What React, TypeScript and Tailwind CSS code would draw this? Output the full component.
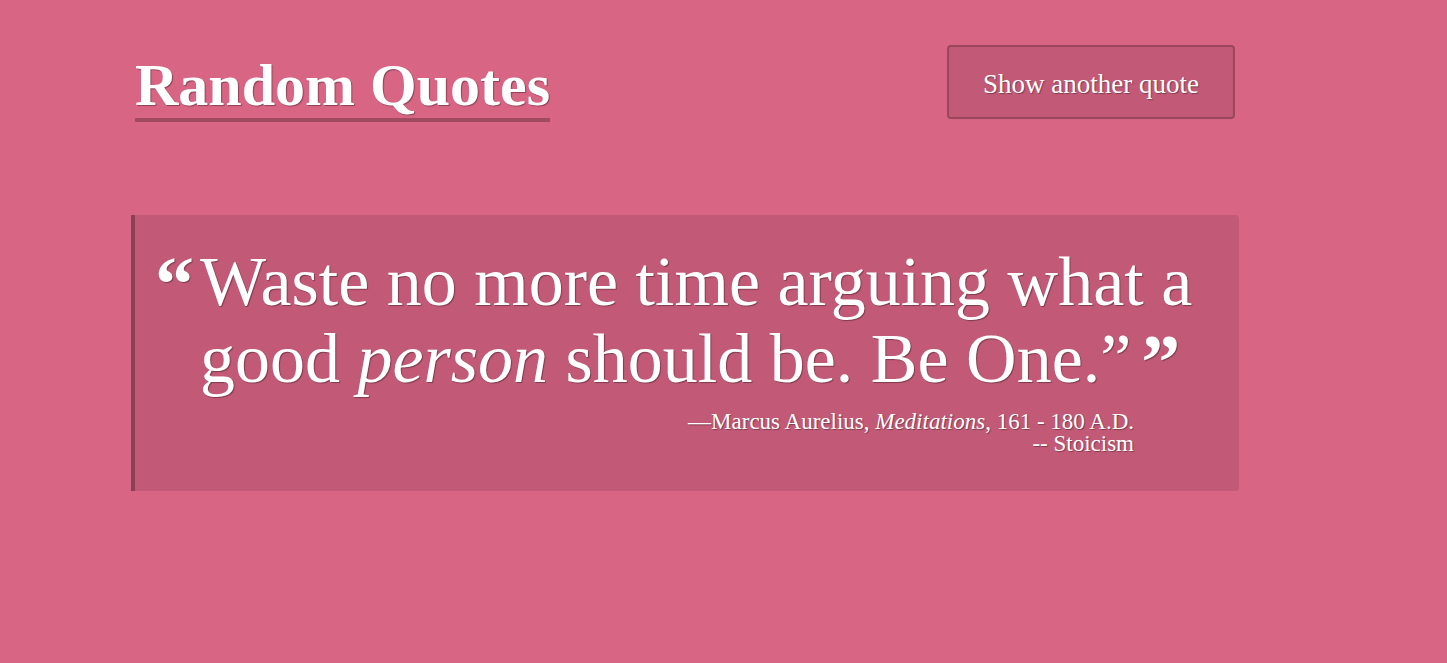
export default function App() {
  const shadow = "[text-shadow:1px_1px_1px_rgba(0,0,0,0.35)]";
  return (
    <div className="min-h-screen w-full bg-[#d86584] font-['Liberation_Serif',serif] text-white">
      <div className="ml-[131px] w-[1108px] pt-[45px]">
        <header className="flex items-start justify-between pl-1 pr-1">
          <h1
            className={`mt-[10px] inline-block border-b-4 border-[#a04a62] pb-[3px] text-[60px] font-bold leading-[60px] ${shadow}`}
          >
            Random Quotes
          </h1>
          <button
            className={`h-[74px] w-[288px] rounded border-2 border-[#9a475e] bg-[#c25a77] pt-[4px] text-[27px] ${shadow}`}
          >
            Show another quote
          </button>
        </header>

        <section className="mt-[93px] rounded-r border-l-4 border-[#8e3e55] bg-[#c25a77] pb-[36px] pl-[65px] pr-[19px] pt-[28px]">
          <blockquote className={`relative text-[70px] leading-[77px] ${shadow}`}>
            <span className="absolute left-[-45px] top-[2px] text-[78px] font-bold leading-[77px]">“</span>
            Waste no more time arguing what a good <em>person</em> should be. Be One.”
            <span className="ml-[10px] inline-block translate-y-[6px] text-[78px] font-bold leading-[70px]">”</span>
          </blockquote>
          <div className={`mr-[86px] mt-[14px] text-right text-[23px] leading-[22px] ${shadow}`}>
            <div>
              —Marcus Aurelius, <em>Meditations</em>, 161 - 180 A.D.
            </div>
            <div>-- Stoicism</div>
          </div>
        </section>
      </div>
    </div>
  );
}
